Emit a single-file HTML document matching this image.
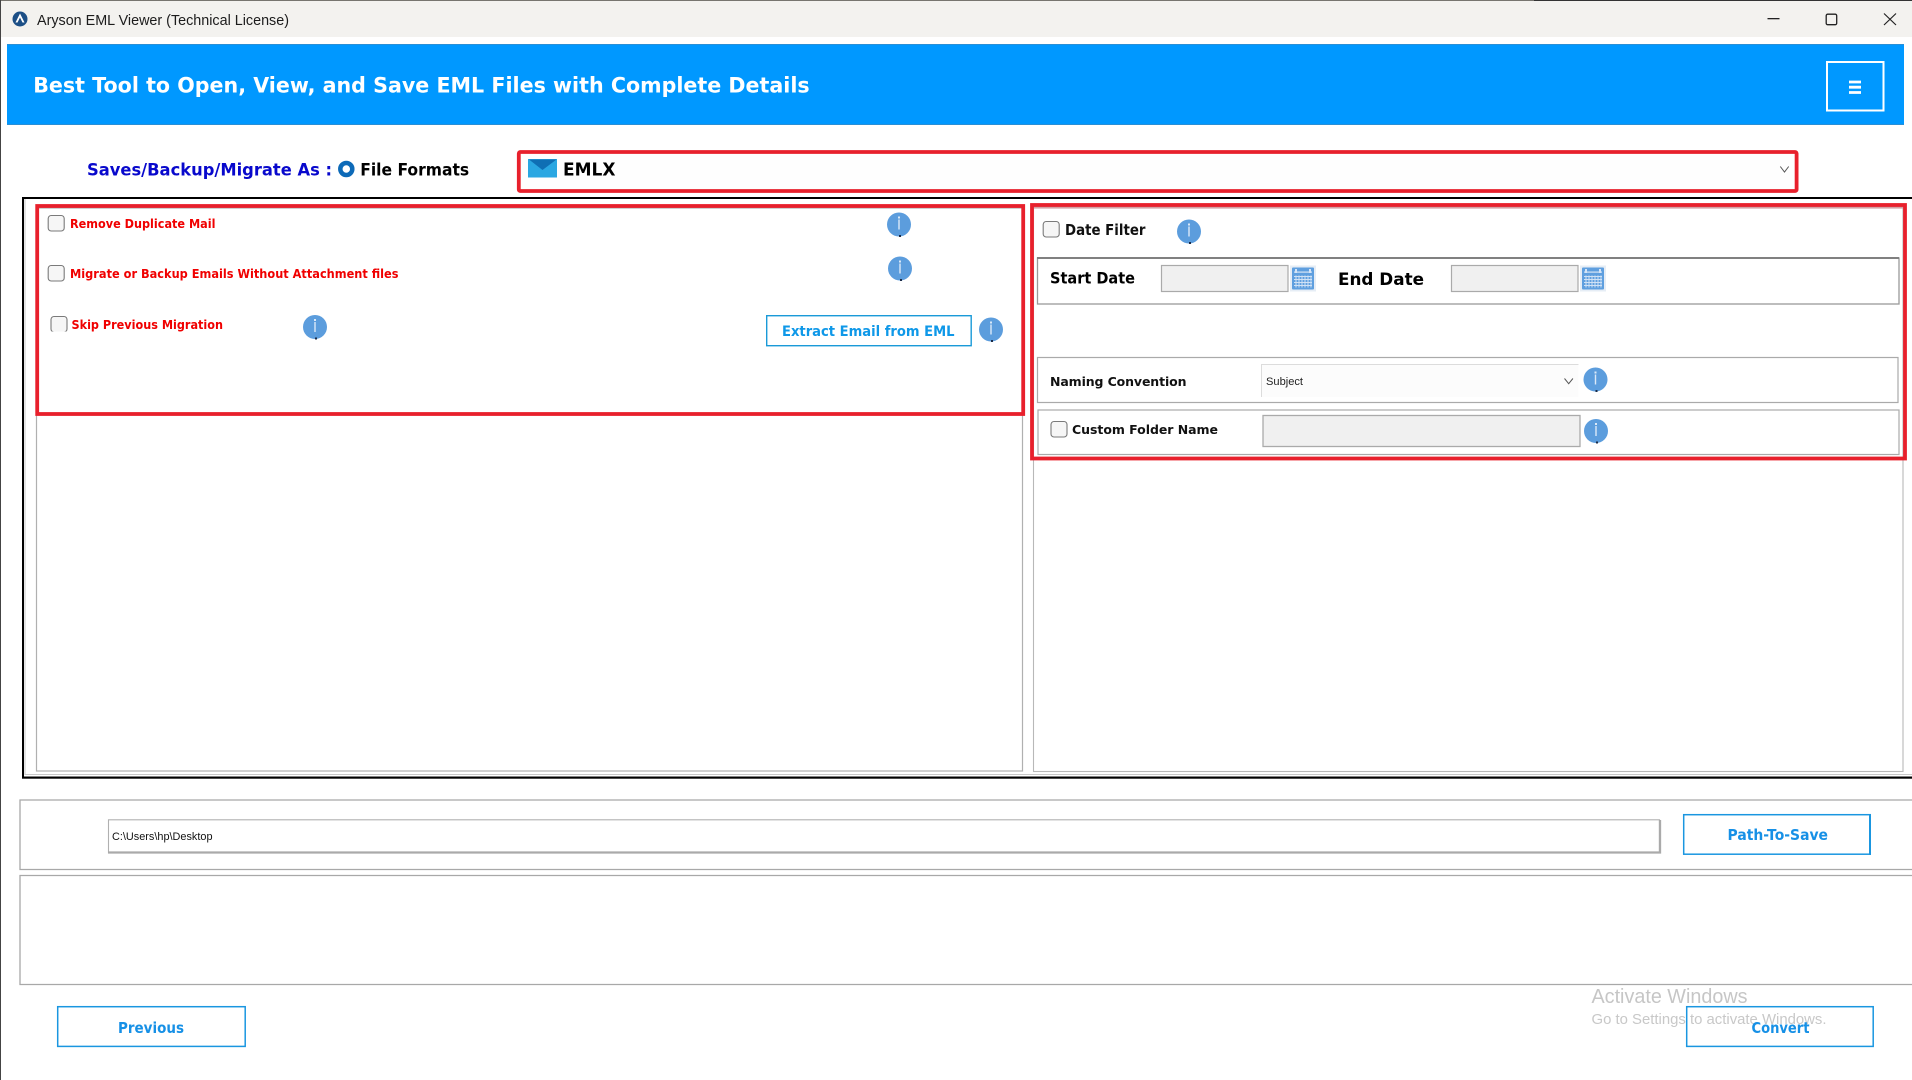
<!DOCTYPE html>
<html lang="en">
<head>
<meta charset="utf-8">
<title>Aryson EML Viewer (Technical License)</title>
<style>
html,body{margin:0;padding:0;background:#fff;width:1912px;height:1080px;overflow:hidden}
svg{display:block}
text{font-family:"DejaVu Sans",Verdana,sans-serif;font-weight:700}
.win{font-family:"Liberation Sans",Arial,sans-serif;font-weight:400}
.red{fill:#f00000;font-size:12.5px}
.blu{fill:#1690e6}
</style>
</head>
<body>
<svg xmlns="http://www.w3.org/2000/svg" width="1912" height="1080" viewBox="0 0 1912 1080">
<defs>
<g id="info">
  <ellipse cx="0" cy="0" rx="12" ry="12" fill="#5c9ddd"/>
  <rect x="-0.7" y="-5" width="1.4" height="10" fill="#dbe9f8"/>
  <rect x="-1" y="-8" width="2" height="2" fill="#dbe9f8"/>
  <rect x="0" y="10.5" width="2" height="2" fill="#1c2c48"/>
</g>
<g id="cal">
  <rect x="0" y="0" width="26" height="26" fill="#e6edf5"/>
  <rect x="2" y="2" width="22" height="22" rx="1" fill="#5f9fdf"/>
  <rect x="4" y="6" width="18" height="1.2" fill="#d4e4f6"/>
  <rect x="5" y="3.5" width="2" height="4" fill="#d4e4f6"/>
  <rect x="19" y="3.5" width="2" height="4" fill="#d4e4f6"/>
  <path d="M4 11h18M4 14h18M4 17h18M4 20h18M6 10v12M9 10v12M12 10v12M15 10v12M18 10v12M21 10v12" stroke="#cfe1f5" stroke-width="1" fill="none"/>
</g>
<g id="cb">
  <rect x="0.5" y="0.5" width="16" height="15.500" rx="3" fill="#f6f6f6" stroke="#7a7a7a" stroke-width="1.100"/>
</g>
</defs>

<!-- window frame & title bar -->
<rect width="1912" height="1080" fill="#fff"/>
<rect x="0" y="0" width="1912" height="37" fill="#f3f2ef"/>
<rect x="0" y="0" width="1912" height="1" fill="#77756f"/>
<rect x="1534" y="0" width="378" height="1" fill="#333"/>
<rect x="0" y="0" width="1" height="1080" fill="#444"/>
<circle cx="20" cy="19" r="7.5" fill="#1c4f86"/>
<path d="M20 13.5l4.5 9h-2l-2.500-5-2.500 5h-2z" fill="#fff"/>
<text class="win" x="37" y="25" font-size="14.500" fill="#1c1c1c" textLength="252" lengthAdjust="spacingAndGlyphs">Aryson EML Viewer (Technical License)</text>
<rect x="1767.500" y="18" width="12" height="1.300" fill="#222"/>
<rect x="1826.200" y="14.200" width="10.500" height="10.500" rx="1.500" fill="none" stroke="#222" stroke-width="1.300"/>
<path d="M1884 13.500L1896 25M1896 13.500L1884 25" stroke="#222" stroke-width="1.200" fill="none"/>

<!-- header -->
<rect x="7" y="44" width="1897" height="81" fill="#0098ff"/>
<path d="M7 44.500H1904M7 124.500H1904" stroke="#2a8fd6" stroke-width="1" fill="none"/>
<text x="33.200" y="92.700" font-size="21" fill="#fff" textLength="776.500" lengthAdjust="spacingAndGlyphs">Best Tool to Open, View, and Save EML Files with Complete Details</text>
<rect x="1827" y="62" width="56.500" height="48.500" fill="none" stroke="#fff" stroke-width="2"/>
<path d="M1849 82h12M1849 87.200h12M1849 92.500h12" stroke="#fff" stroke-width="2.800" fill="none"/>

<!-- saves row -->
<text x="87" y="175.500" font-size="17" fill="#0808cc" textLength="245" lengthAdjust="spacingAndGlyphs">Saves/Backup/Migrate As :</text>
<circle cx="346.300" cy="169" r="6" fill="#fff" stroke="#0d6ab8" stroke-width="4.500"/>
<text x="360.200" y="175.500" font-size="17" fill="#000" textLength="109" lengthAdjust="spacingAndGlyphs">File Formats</text>

<!-- EMLX combo -->
<rect x="518.800" y="152" width="1277.800" height="39" rx="1.500" fill="#fefefe" stroke="#e8202c" stroke-width="3.800"/>
<rect x="528" y="159" width="29" height="18.500" fill="#2aa7e2"/>
<path d="M529 159.500L542.500 170 556.500 159.500z" fill="#0f6fb4"/>
<text x="563" y="175.500" font-size="18" fill="#000" textLength="52.500" lengthAdjust="spacingAndGlyphs">EMLX</text>
<path d="M1780.300 166.500l4.200 5.500 4.200-5.500" fill="none" stroke="#555" stroke-width="1"/>

<!-- main frame -->
<path d="M1912 198H23V777.500H1912" fill="none" stroke="#000" stroke-width="2"/>
<rect x="22" y="776.500" width="1890" height="2.200" fill="#000"/>
<path d="M25 199V774.500H1912" fill="none" stroke="#c8c8c8" stroke-width="1"/>
<rect x="36.500" y="208" width="986" height="563" fill="#fff" stroke="#b0b0b0" stroke-width="1.200"/>
<rect x="1033.500" y="207" width="869.500" height="564.500" fill="#fff" stroke="#b8b8b8" stroke-width="1.100"/>

<!-- left red box -->
<rect x="37.200" y="206" width="986" height="208" fill="none" stroke="#e8202c" stroke-width="3.800"/>
<use href="#cb" x="47.700" y="215"/>
<text class="red" x="70" y="228" textLength="145.500" lengthAdjust="spacingAndGlyphs">Remove Duplicate Mail</text>
<use href="#cb" x="47.700" y="265"/>
<text class="red" x="70" y="278" textLength="328.500" lengthAdjust="spacingAndGlyphs">Migrate or Backup Emails Without Attachment files</text>
<use href="#cb" x="50.500" y="316"/>
<rect x="50" y="331.500" width="18" height="3" fill="#fff"/>
<text class="red" x="71.500" y="329" textLength="151.500" lengthAdjust="spacingAndGlyphs">Skip Previous Migration</text>
<use href="#info" x="899" y="224.500"/>
<use href="#info" x="900" y="268.500"/>
<use href="#info" x="315" y="327"/>
<rect x="766.700" y="315.700" width="204.500" height="30" fill="#fff" stroke="#1a9ad8" stroke-width="1.400"/>
<text x="782" y="336" font-size="14.500" fill="#0f98e8" textLength="172.500" lengthAdjust="spacingAndGlyphs">Extract Email from EML</text>
<use href="#info" x="991" y="329.500"/>

<!-- right red box -->
<rect x="1032" y="205" width="873" height="253.500" fill="none" stroke="#e8202c" stroke-width="3.800"/>
<rect x="1034" y="207" width="869" height="1.600" fill="#d4a0a4"/>
<use href="#cb" x="1042.700" y="221"/>
<text x="1065" y="235" font-size="15" fill="#111" textLength="80.500" lengthAdjust="spacingAndGlyphs">Date Filter</text>
<use href="#info" x="1189" y="231.500"/>

<rect x="1037.500" y="258" width="861.500" height="46" fill="#fff" stroke="#999" stroke-width="1.300"/>
<rect x="1037" y="257" width="862" height="2" fill="#808080"/>
<text x="1050" y="283.700" font-size="16" fill="#000" textLength="85" lengthAdjust="spacingAndGlyphs">Start Date</text>
<rect x="1161.500" y="265.500" width="126.500" height="26" fill="#f0f0f0" stroke="#aaa" stroke-width="1.200"/>
<use href="#cal" x="1290" y="265.500"/>
<text x="1338" y="285" font-size="17" fill="#000" textLength="86" lengthAdjust="spacingAndGlyphs">End Date</text>
<rect x="1451.500" y="265.500" width="126.500" height="26" fill="#f0f0f0" stroke="#aaa" stroke-width="1.200"/>
<use href="#cal" x="1580" y="265.500"/>

<rect x="1037.500" y="357.500" width="860.500" height="45" fill="#fff" stroke="#aaa" stroke-width="1.200"/>
<text x="1050" y="386" font-size="12.500" fill="#111" textLength="136.500" lengthAdjust="spacing">Naming Convention</text>
<rect x="1261" y="364" width="317.500" height="33" fill="#fcfcfc"/>
<path d="M1261.500 397V364.500H1578.500" fill="none" stroke="#dcdcdc" stroke-width="1"/>
<text class="win" x="1266" y="385" font-size="11" fill="#222" textLength="37" lengthAdjust="spacingAndGlyphs">Subject</text>
<path d="M1564.500 378.500l4.200 5.200 4.200-5.200" fill="none" stroke="#555" stroke-width="1"/>
<use href="#info" x="1595.500" y="379.500"/>

<rect x="1038" y="410" width="861" height="44.500" fill="#fff" stroke="#aaa" stroke-width="1.200"/>
<use href="#cb" x="1050.500" y="421"/>
<text x="1072" y="434" font-size="12.500" fill="#111" textLength="146" lengthAdjust="spacing">Custom Folder Name</text>
<rect x="1263" y="415.500" width="317" height="31" fill="#f0f0f0" stroke="#aaa" stroke-width="1.300"/>
<use href="#info" x="1596" y="431"/>

<!-- path row -->
<path d="M1912 800H20V869.500H1912" fill="none" stroke="#a8a8a8" stroke-width="1.300"/>
<rect x="108.500" y="819.800" width="1551" height="33" fill="#fff" stroke="#b0b0b0" stroke-width="1.100"/>
<path d="M108 852.500H1660V820" fill="none" stroke="#aaa" stroke-width="2.300"/>
<text class="win" x="112" y="840" font-size="11" fill="#111" textLength="100.500" lengthAdjust="spacingAndGlyphs">C:\Users\hp\Desktop</text>
<rect x="1683.700" y="814.700" width="186.500" height="39.500" fill="#fff" stroke="#1a96e0" stroke-width="1.500"/>
<rect x="1869" y="814" width="2" height="41" fill="#1a96e0"/>
<text class="blu" x="1727.500" y="840" font-size="15.500" textLength="100.500" lengthAdjust="spacingAndGlyphs">Path-To-Save</text>

<!-- log box -->
<path d="M1912 875.500H20V984.500H1912" fill="none" stroke="#a8a8a8" stroke-width="1.300"/>

<!-- bottom buttons -->
<rect x="57.700" y="1006.700" width="187.500" height="39.700" fill="#fff" stroke="#1a96e0" stroke-width="1.500"/>
<text class="blu" x="118" y="1033" font-size="15" textLength="66" lengthAdjust="spacingAndGlyphs">Previous</text>
<rect x="1686.700" y="1006.700" width="186.500" height="39.700" fill="#fff" stroke="#1a96e0" stroke-width="1.500"/>

<!-- watermark -->
<text class="win" x="1591.500" y="1003" font-size="20" fill="#c6c6c6" textLength="156" lengthAdjust="spacingAndGlyphs">Activate Windows</text>
<text class="win" x="1591.500" y="1024" font-size="14.500" fill="#c8c8c8" textLength="235" lengthAdjust="spacingAndGlyphs">Go to Settings to activate Windows.</text>
<text class="blu" x="1751.500" y="1033" font-size="15" textLength="58" lengthAdjust="spacingAndGlyphs">Convert</text>
</svg>
</body>
</html>
